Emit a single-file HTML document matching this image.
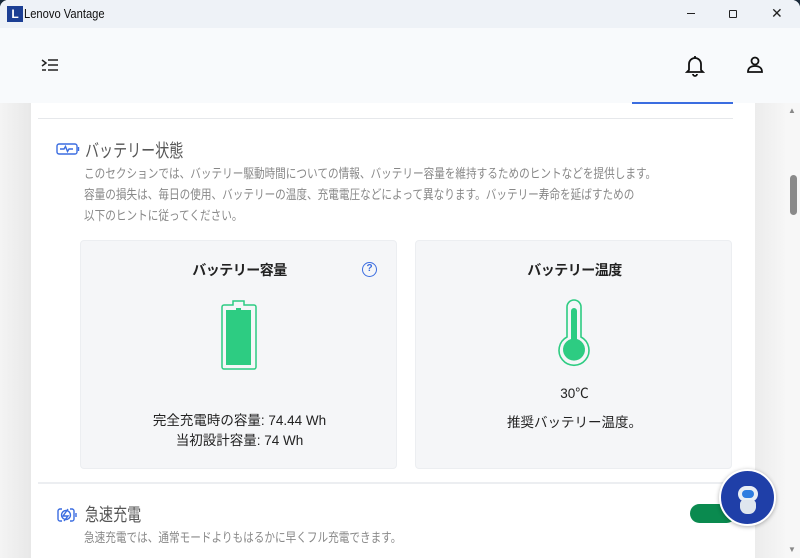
<!DOCTYPE html>
<html><head><meta charset="utf-8"><style>
*{margin:0;padding:0;box-sizing:border-box}
body{width:800px;height:558px;overflow:hidden;font-family:"Liberation Sans","Noto Sans CJK JP",sans-serif;background:#1a2a3a;position:relative}
.win{position:absolute;left:0;top:0;width:800px;height:558px;background:#fff;border-radius:8px 8px 0 0;overflow:hidden}
.tb{position:absolute;top:0;left:0;width:800px;height:28px;background:#eef2f7}
.hd{position:absolute;top:28px;left:0;width:800px;height:75px;background:#f8fafc}
.t{position:absolute;white-space:nowrap}
.card{position:absolute;top:240px;width:317px;height:229px;background:#f5f6f8;border-radius:4px;border:1px solid #eceef1}
.desc{font-size:12.8px;color:#888;line-height:21px;transform:scaleX(0.83);transform-origin:0 0}
.h{font-size:18px;color:#555;transform:scaleX(0.78);transform-origin:0 0}
</style></head><body><div class="win">
<div class="tb">
<div style="position:absolute;left:7px;top:6px;width:16px;height:16px;background:#1c3f94;color:#fff;font-size:12px;font-weight:bold;text-align:center;line-height:16px">L</div>
<div class="t" style="left:24px;top:6px;font-size:13px;color:#111;transform:scaleX(0.86);transform-origin:0 0">Lenovo Vantage</div>
<div style="position:absolute;left:687px;top:13px;width:8px;height:1px;background:#222"></div>
<div style="position:absolute;left:729px;top:10px;width:8px;height:8px;border:1px solid #222;border-radius:1px"></div>
<div class="t" style="left:771px;top:5px;font-size:14px;color:#222">✕</div>
</div>
<div class="hd">
<svg style="position:absolute;left:40px;top:29px" width="20" height="16" viewBox="0 0 20 16" fill="none" stroke="#222" stroke-width="1.5"><path d="M2 3l4 3-4 3M8 3h10M8 8h10M8 13h10M2 13h4"/></svg>
<svg style="position:absolute;left:685px;top:27px" width="20" height="22" viewBox="0 0 20 22" fill="none" stroke="#111" stroke-width="1.8"><path d="M4 15V9a6 6 0 0 1 12 0v6l2 2H2z"/><path d="M8 19a2 2 0 0 0 4 0"/><path d="M10 1v2"/></svg>
<svg style="position:absolute;left:745px;top:27px" width="20" height="20" viewBox="0 0 20 20" fill="none" stroke="#111" stroke-width="1.8"><circle cx="10" cy="6" r="3.5"/><path d="M3 17c0-4 3-6 7-6s7 2 7 6z"/></svg>
</div>
<div style="position:absolute;left:0;top:103px;width:31px;height:455px;background:linear-gradient(90deg,#f4f4f4,#e8e8e8)"></div>
<div style="position:absolute;left:755px;top:103px;width:30px;height:455px;background:linear-gradient(90deg,#ececec,#f6f6f6)"></div>
<div style="position:absolute;left:785px;top:103px;width:15px;height:455px;background:#f7f7f7"></div>
<div style="position:absolute;left:790px;top:175px;width:7px;height:40px;background:#8a8a8a;border-radius:4px"></div>
<div class="t" style="left:788px;top:106px;font-size:8px;color:#888">▲</div>
<div class="t" style="left:788px;top:545px;font-size:8px;color:#888">▼</div>
<div style="position:absolute;left:632px;top:102px;width:101px;height:2px;background:#3b6de0"></div>
<div style="position:absolute;left:38px;top:118px;width:695px;height:1px;background:#e6e8eb"></div>
<svg style="position:absolute;left:56px;top:143px" width="24" height="12" viewBox="0 0 24 12" fill="none" stroke="#3b6de0" stroke-width="1.4"><rect x="1" y="1" width="20" height="10" rx="2"/><path d="M22.5 4v4"/><path d="M4 6h4l1.5-2.5 2 5 1.5-2.5h4"/></svg>
<div class="t h" style="left:85px;top:137px">バッテリー状態</div>
<div class="t desc" style="left:84px;top:163px">このセクションでは、バッテリー駆動時間についての情報、バッテリー容量を維持するためのヒントなどを提供します。<br>容量の損失は、毎日の使用、バッテリーの温度、充電電圧などによって異なります。バッテリー寿命を延ばすための<br>以下のヒントに従ってください。</div>
<div class="card" style="left:80px">
<div class="t" style="left:0;width:317px;text-align:center;top:19px;font-size:14px;letter-spacing:-0.5px;font-weight:bold;color:#222">バッテリー容量</div>
<div style="position:absolute;left:281px;top:21px;width:15px;height:15px;border:1.5px solid #3b6de0;border-radius:50%;color:#3b6de0;font-size:10px;font-weight:bold;text-align:center;line-height:12px">?</div>
<svg style="position:absolute;left:139px;top:58px" width="38" height="72" viewBox="0 0 38 72" fill="none"><path d="M13 2h11v4h10a2 2 0 0 1 2 2v60a2 2 0 0 1-2 2H4a2 2 0 0 1-2-2V8a2 2 0 0 1 2-2h9z" stroke="#2dcc82" stroke-width="1.5"/><path d="M16 9h5v2h10v55H6V11h10z" fill="#2dcc82"/></svg>
<div class="t" style="left:0;width:317px;text-align:center;top:170px;font-size:13.5px;color:#222;line-height:20px">完全充電時の容量: 74.44 Wh<br>当初設計容量: 74 Wh</div>
</div>
<div class="card" style="left:415px">
<div class="t" style="left:0;width:317px;text-align:center;top:19px;font-size:14px;letter-spacing:-0.5px;font-weight:bold;color:#222">バッテリー温度</div>
<svg style="position:absolute;left:138px;top:56px" width="40" height="74" viewBox="0 0 40 74" fill="none"><path d="M13 40V10a7 7 0 0 1 14 0v30a15 15 0 1 1-14 0z" stroke="#2dcc82" stroke-width="1.6"/><path d="M17 42V14a3 3 0 0 1 6 0v28a11 11 0 1 1-6 0z" fill="#2dcc82"/></svg>
<div class="t" style="left:0;width:317px;text-align:center;top:141px;font-size:13.5px;color:#222">30℃</div>
<div class="t" style="left:0;width:317px;text-align:center;top:170px;font-size:13.5px;color:#222">推奨バッテリー温度。</div>
</div>
<div style="position:absolute;left:38px;top:482px;width:695px;height:2px;background:#eceef1"></div>
<svg style="position:absolute;left:56px;top:507px" width="22" height="16" viewBox="0 0 22 16" fill="none" stroke="#3b6de0" stroke-width="1.4"><path d="M6 2H4a2 2 0 0 0-2 2v8a2 2 0 0 0 2 2h2M14 2h2a2 2 0 0 1 2 2v8a2 2 0 0 1-2 2h-2M20 6v4"/><path d="M12 2l-5 7h5l-4 5"/><circle cx="10" cy="8" r="4.5"/></svg>
<div class="t h" style="left:85px;top:501px">急速充電</div>
<div class="t desc" style="left:84px;top:527px">急速充電では、通常モードよりもはるかに早くフル充電できます。</div>
<div style="position:absolute;left:690px;top:504px;width:46px;height:19px;background:#0a8a4f;border-radius:10px"></div>
<div style="position:absolute;left:719px;top:469px;width:57px;height:57px;background:#1f3fa8;border-radius:50%;border:2px solid #fff;box-shadow:0 1px 4px rgba(0,0,0,.3)"></div>
<div style="position:absolute;left:738px;top:486px;width:20px;height:16px;background:#e8eef5;border-radius:8px"></div>
<div style="position:absolute;left:742px;top:490px;width:12px;height:8px;background:#2e7de0;border-radius:4px"></div>
<div style="position:absolute;left:740px;top:500px;width:16px;height:14px;background:#dfe6ee;border-radius:4px 4px 7px 7px"></div>
</div></body></html>
